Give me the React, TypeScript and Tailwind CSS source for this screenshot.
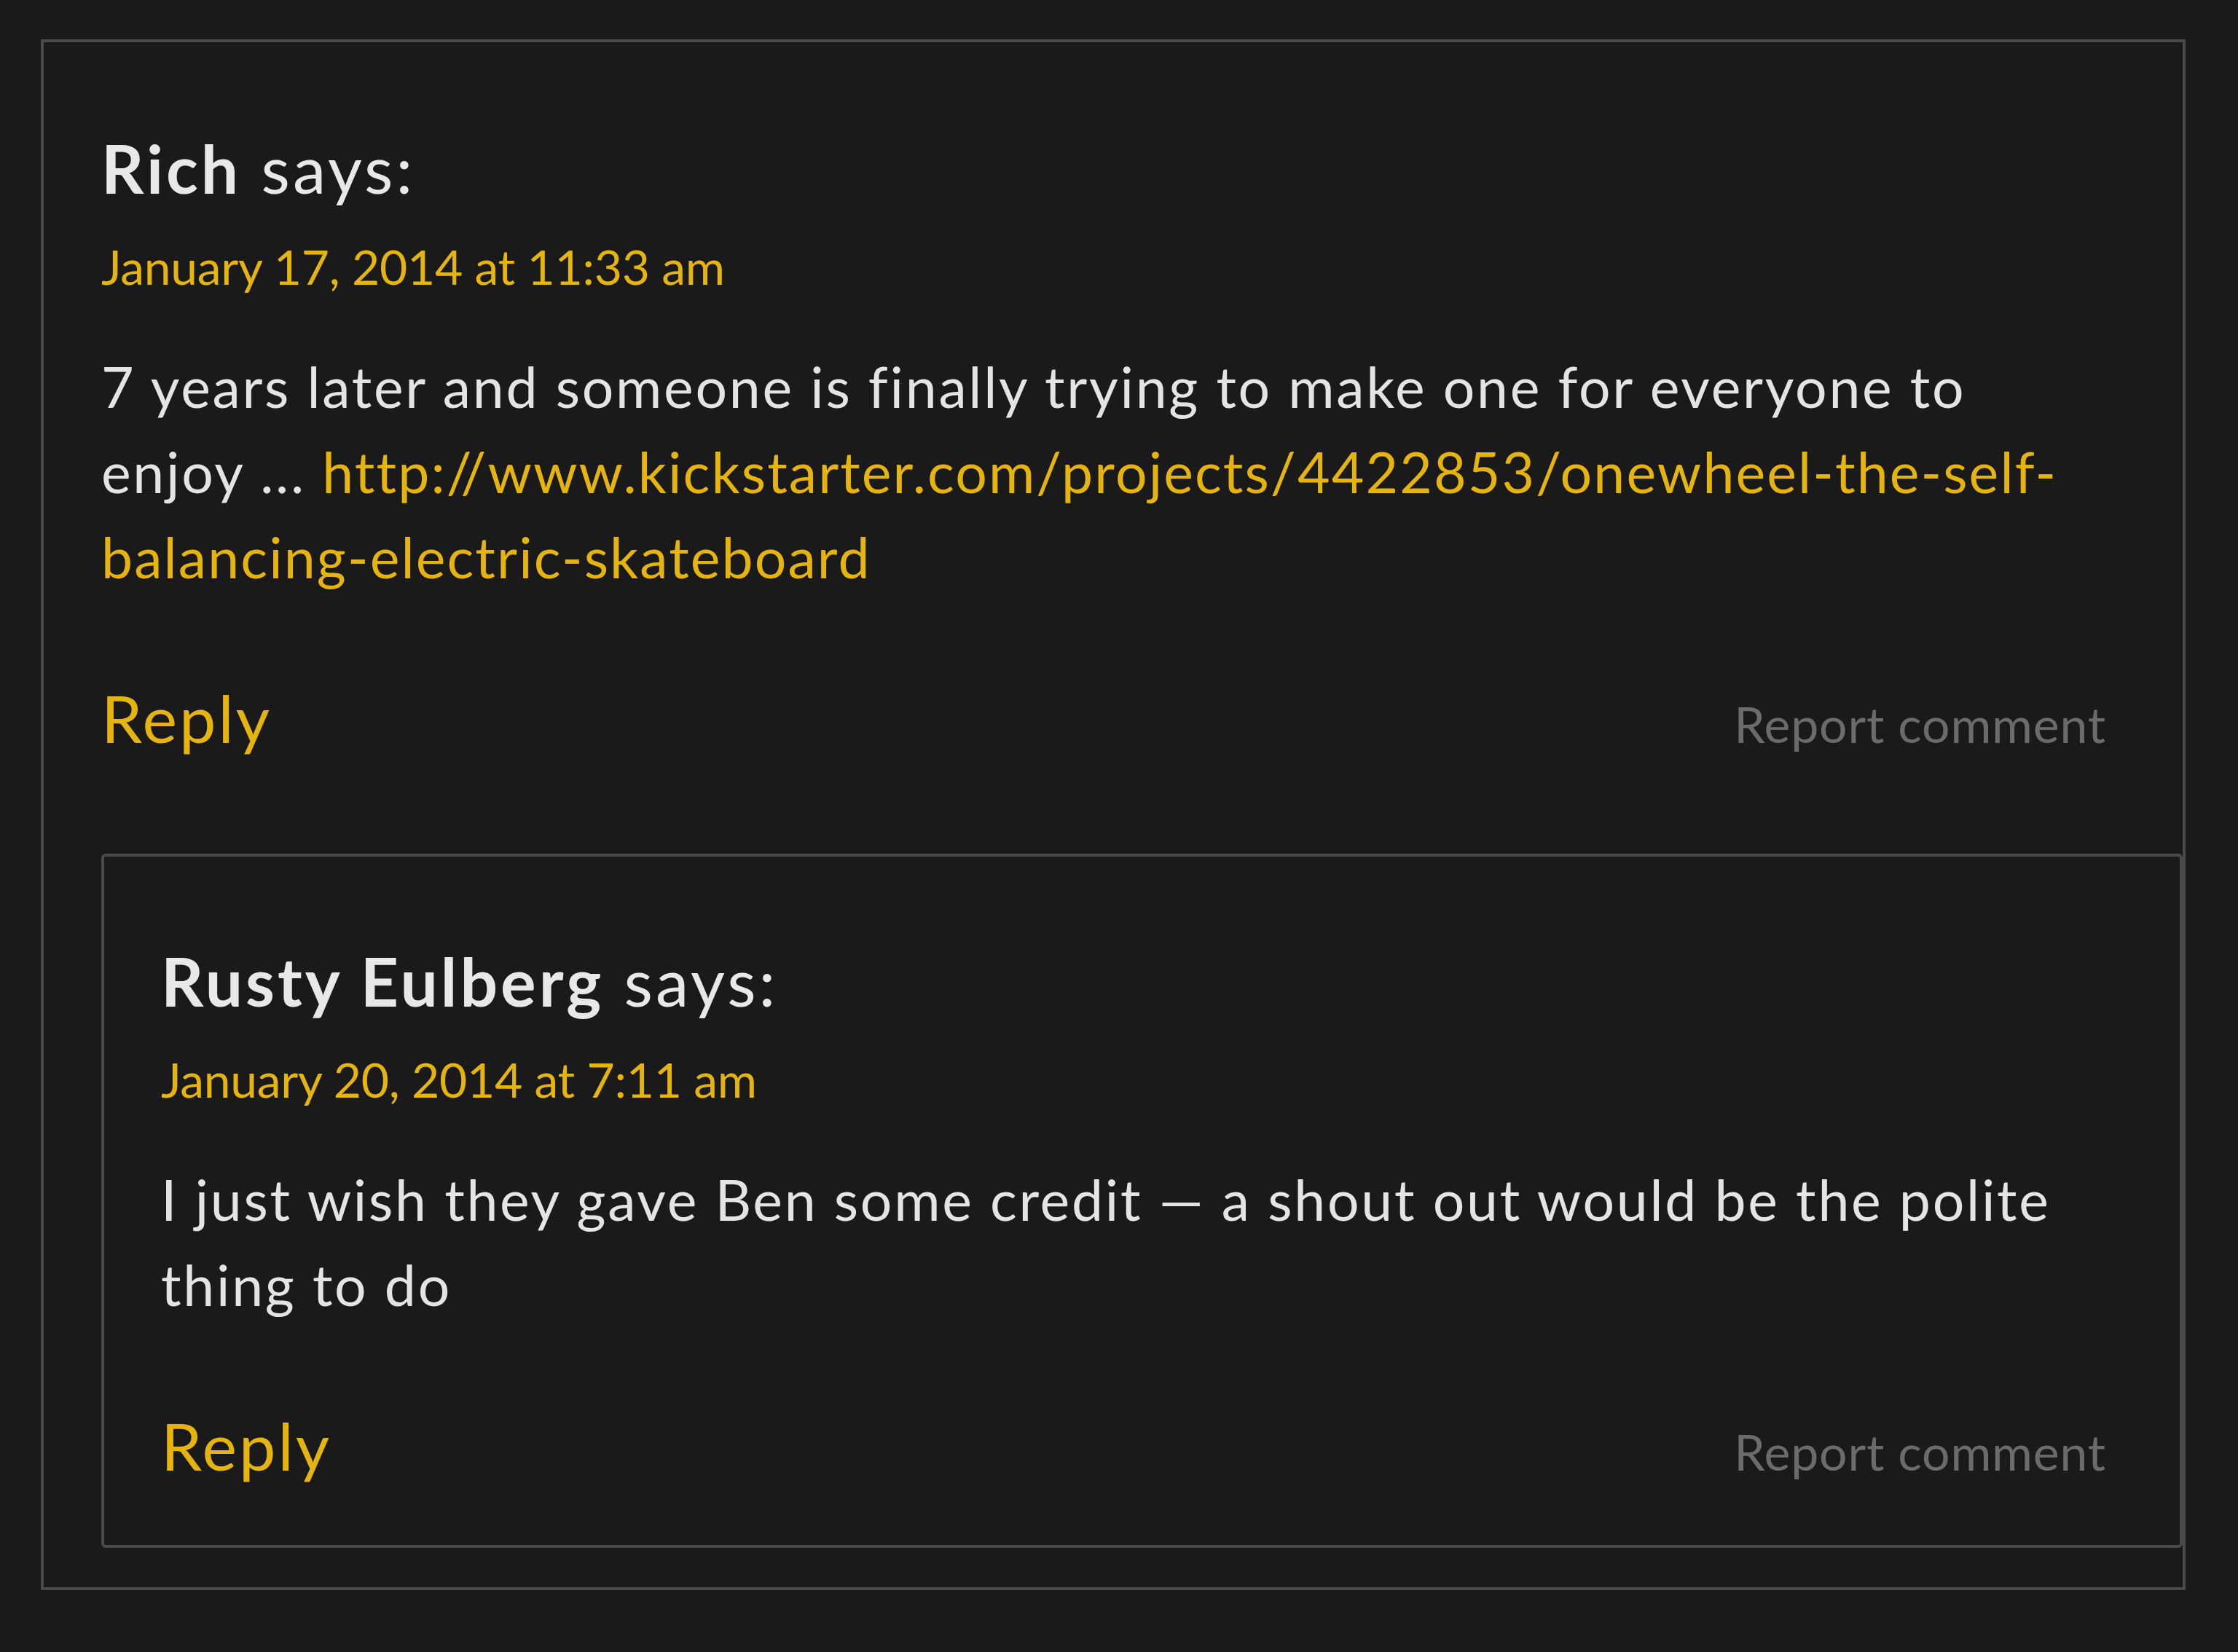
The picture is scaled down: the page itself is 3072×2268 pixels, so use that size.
import React from 'react';

type Comment = {
  author: string;
  date: string;
  body: React.ReactNode;
};

const rich: Comment = {
  author: 'Rich',
  date: 'January 17, 2014 at 11:33 am',
  body: (
    <>
      7 years later and someone is finally trying to make one for everyone to enjoy ...{' '}
      <a href="#" className="tracking-[2.1px] text-[#e6b40f]">
        http://www.kickstarter.com/projects/4422853/onewheel-the-self-balancing-electric-skateboard
      </a>
    </>
  ),
};

const rusty: Comment = {
  author: 'Rusty Eulberg',
  date: 'January 20, 2014 at 7:11 am',
  body: <>I just wish they gave Ben some credit — a shout out would be the polite thing to do</>,
};

function CommentBody({ comment, nested = false }: { comment: Comment; nested?: boolean }) {
  return (
    <div className={nested ? 'pr-[101px]' : 'pr-[105px]'}>
      {/* 名前 */}
      <p className="text-[91px] leading-[108px] tracking-[4px] text-[#e8e8e8]">
        <span className="font-bold">{comment.author}</span> says:
      </p>
      {/* 日付 */}
      <p className="mt-[41px] text-[66px] leading-[80px] tracking-[-0.3px] text-[#e6b40f]">
        <a href="#">{comment.date}</a>
      </p>
      {/* 本文 */}
      <p className="mt-[66px] text-[77px] leading-[117px] tracking-[2.7px] text-[#e4e4e4]">
        {comment.body}
      </p>
      {/* ボタン */}
      <div className="mt-[108px] flex items-baseline justify-between">
        <a href="#" className="text-[90px] leading-[108px] tracking-[3px] text-[#e6b40f]">
          Reply
        </a>
        <a href="#" className="text-[68px] leading-[80px] tracking-[0.8px] text-[#6b6b6b]">
          Report comment
        </a>
      </div>
    </div>
  );
}

export default function App() {
  return (
    <div
      className="min-h-[2268px] bg-[#1a1a1a] pt-[54px] pl-[56px]"
      style={{ fontFamily: 'Lato, "Open Sans", sans-serif' }}
    >
      <div className="w-[2944px] border-4 border-[#4a4a4a] pt-[119px] pb-[54px] pl-[79px]">
        <CommentBody comment={rich} />

        {/* 返信 */}
        <div className="mt-[133px] rounded-[6px] border-4 border-[#4a4a4a] pt-[117px] pb-[83px] pl-[78px]">
          <CommentBody comment={rusty} nested />
        </div>
      </div>
    </div>
  );
}
